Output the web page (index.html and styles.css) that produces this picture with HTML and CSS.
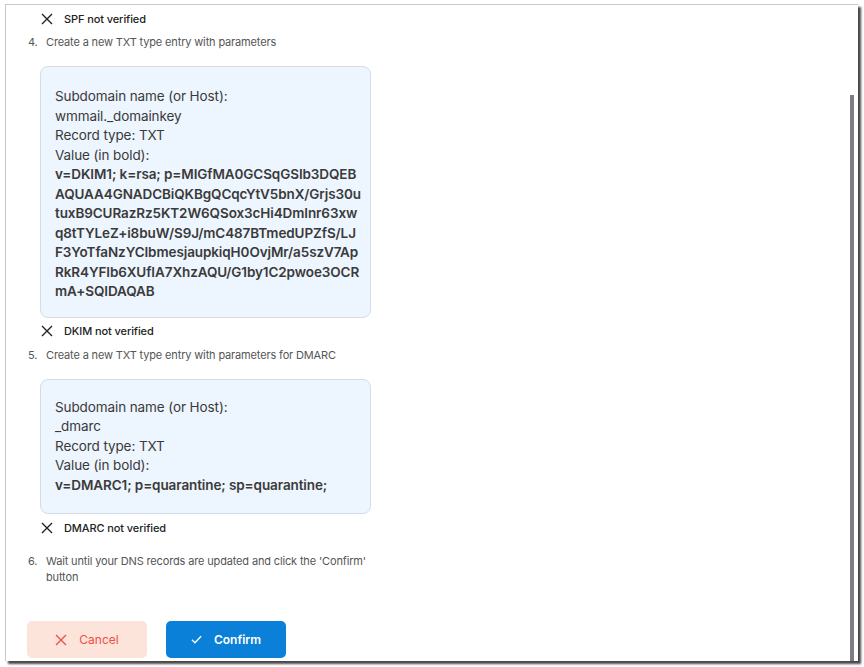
FILE: index.html
```html
<!DOCTYPE html>
<html>
<head>
<meta charset="utf-8">
<link rel="stylesheet" href="styles.css">
</head>
<body>
<div class="panel">
  <div class="status">
    <svg class="x-icon" viewBox="0 0 12 12" width="12" height="12"><path d="M1 1L11 11M11 1L1 11" stroke="#222" stroke-width="1.4" fill="none"/></svg>
    <span>SPF not verified</span>
  </div>
  <div class="step step-first"><span class="num">4.</span><span>Create a new TXT type entry with parameters</span></div>
  <div class="box">
    <div>Subdomain name (or Host):</div>
    <div>wmmail._domainkey</div>
    <div>Record type: TXT</div>
    <div>Value (in bold):</div>
    <div class="value">v=DKIM1; k=rsa; p=MIGfMA0GCSqGSIb3DQEB<br>AQUAA4GNADCBiQKBgQCqcYtV5bnX/Grjs30u<br>tuxB9CURazRz5KT2W6QSox3cHi4DmInr63xw<br>q8tTYLeZ+i8buW/S9J/mC487BTmedUPZfS/LJ<br>F3YoTfaNzYCIbmesjaupkiqH0OvjMr/a5szV7Ap<br>RkR4YFIb6XUfIA7XhzAQU/G1by1C2pwoe3OCR<br>mA+SQIDAQAB</div>
  </div>
  <div class="status status-after">
    <svg class="x-icon" viewBox="0 0 12 12" width="12" height="12"><path d="M1 1L11 11M11 1L1 11" stroke="#222" stroke-width="1.4" fill="none"/></svg>
    <span>DKIM not verified</span>
  </div>
  <div class="step"><span class="num">5.</span><span>Create a new TXT type entry with parameters for DMARC</span></div>
  <div class="box box2">
    <div>Subdomain name (or Host):</div>
    <div>_dmarc</div>
    <div>Record type: TXT</div>
    <div>Value (in bold):</div>
    <div class="value">v=DMARC1; p=quarantine; sp=quarantine;</div>
  </div>
  <div class="status status-after status-last">
    <svg class="x-icon" viewBox="0 0 12 12" width="12" height="12"><path d="M1 1L11 11M11 1L1 11" stroke="#222" stroke-width="1.4" fill="none"/></svg>
    <span>DMARC not verified</span>
  </div>
  <div class="step step-last"><span class="num">6.</span><span>Wait until your DNS records are updated and click the 'Confirm'<br>button</span></div>
  <div class="actions">
    <button class="btn btn-cancel">
      <svg viewBox="0 0 12 12" width="12" height="12"><path d="M1 1L11 11M11 1L1 11" stroke="#f0504c" stroke-width="1.4" fill="none"/></svg>
      <span>Cancel</span>
    </button>
    <button class="btn btn-confirm">
      <svg viewBox="0 0 12 12" width="11" height="11"><path d="M1 6.3L4.3 9.5L11 2.5" stroke="#fff" stroke-width="1.5" fill="none"/></svg>
      <span>Confirm</span>
    </button>
  </div>
  <div class="scroll-thumb"></div>
</div>
</body>
</html>
```

FILE: styles.css
```css
html, body {
  margin: 0;
  padding: 0;
  background: #ffffff;
}
body {
  font-family: "Inter", "Noto Sans", sans-serif;
  width: 864px;
  height: 667px;
  overflow: hidden;
}
.panel {
  position: relative;
  box-sizing: border-box;
  margin: 4px 0 0 5px;
  width: 853px;
  height: 657px;
  background: #fff;
  border-top: 1px solid #c8c8c8;
  border-left: 1px solid #c8c8c8;
  box-shadow: 3px 3px 2px rgba(40, 40, 40, 0.85);
  padding: 6px 0 0 0;
  overflow: hidden;
}
.status {
  display: flex;
  align-items: center;
  gap: 11px;
  height: 16px;
  margin-left: 35px;
  font-size: 11px;
  font-weight: 500;
  color: #222;
  letter-spacing: -0.1px;
}
.status-after { margin-top: 5px; }
.status-last { margin-top: 6px; }
.step {
  display: flex;
  margin-left: 22px;
  margin-top: 8px;
  font-size: 11px;
  line-height: 16px;
  color: #555;
  letter-spacing: -0.15px;
}
.step-first { margin-top: 7px; }
.step-last { margin-top: 17px; }
.num {
  width: 18px;
  flex: none;
}
.box {
  box-sizing: border-box;
  margin: 16px 0 0 34px;
  width: 331px;
  padding: 20px 14px 15px 14px;
  background: #edf5fe;
  border: 1px solid #d4dde7;
  border-radius: 8px;
  font-size: 13.5px;
  line-height: 19.5px;
  color: #3a3a3a;
  letter-spacing: -0.1px;
}
.box2 { margin-top: 16px; padding-top: 18px; padding-bottom: 18px; }
.value {
  font-weight: 600;
  white-space: nowrap;
}
.actions {
  display: flex;
  gap: 19px;
  margin: 36px 0 0 21px;
}
.btn {
  display: flex;
  align-items: center;
  justify-content: center;
  gap: 12px;
  width: 120px;
  height: 37px;
  border: none;
  border-radius: 5px;
  font-family: "Inter", "Noto Sans", sans-serif;
  font-size: 12px;
  padding: 0;
}
.btn-cancel {
  background: #fde4da;
  color: #ef4f4b;
}
.btn-confirm {
  background: #0a80d8;
  color: #fff;
  font-weight: 600;
}
.scroll-thumb {
  position: absolute;
  left: 844px;
  top: 90px;
  width: 4px;
  height: 566px;
  background: #7d7d84;
}
```
